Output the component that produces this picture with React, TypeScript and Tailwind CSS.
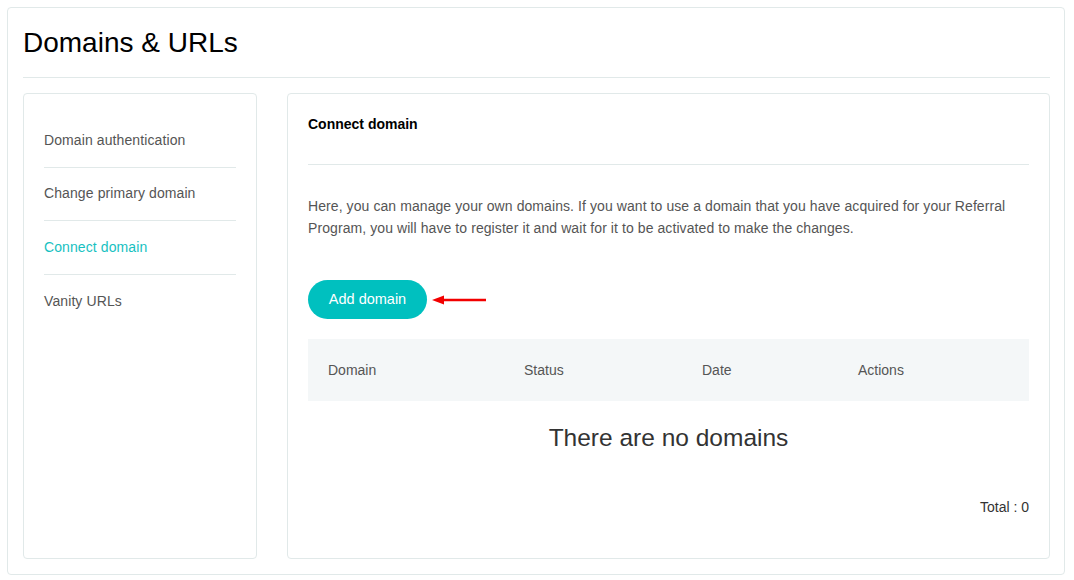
import React from "react";

const font = { fontFamily: '"Liberation Sans", Arial, sans-serif' };

export default function App() {
  const items = ["Domain authentication", "Change primary domain", "Connect domain", "Vanity URLs"];
  return (
    <div className="w-[1074px] h-[580px] bg-white p-[7px]" style={font}>
      <div className="h-[568px] w-[1058px] border border-[#e1e9e9] rounded-[4px] pl-[15px] pr-[14px] pt-[19px]">
        <h1 className="text-[28px] leading-[32px] text-black pb-[18px] border-b border-[#e1e9e9]">Domains &amp; URLs</h1>
        <div className="flex gap-[30px] mt-[15px]">
          <div className="w-[234px] h-[466px] border border-[#e1e9e9] rounded-[4px] px-[20px] pt-[20px]">
            {items.map((t, i) => (
              <div
                key={t}
                className={`h-[53.5px] flex items-center text-[14px] tracking-[0.1px] ${i < items.length - 1 ? "border-b border-[#e1e9e9]" : ""} ${i === 2 ? "text-[#17c1c1]" : "text-[#555555]"}`}
              >
                {t}
              </div>
            ))}
          </div>
          <div className="flex-1 h-[466px] border border-[#e1e9e9] rounded-[4px] px-[20px] pt-[22px] flex flex-col">
            <div className="text-[14px] font-bold text-black leading-[16px] pb-[32px] border-b border-[#e1e9e9]">Connect domain</div>
            <p className="text-[14px] leading-[22px] text-[#555555] mt-[30px] tracking-[0.08px]">
              Here, you can manage your own domains. If you want to use a domain that you have acquired for your Referral Program, you will have to register it and wait for it to be activated to make the changes.
            </p>
            <div className="flex items-center mt-[41px]">
              <button className="h-[39px] w-[119px] rounded-full bg-[#00c0bf] text-white text-[14.5px]">Add domain</button>
              <svg width="62" height="12" viewBox="0 0 62 12" className="ml-[3px]">
                <line x1="10" y1="6" x2="56" y2="6" stroke="#f20000" strokeWidth="2.5" />
                <polygon points="2,6 14,1.5 14,10.5" fill="#f20000" />
              </svg>
            </div>
            <div className="mt-[20px] h-[62px] bg-[#f4f7f8] flex items-center text-[14px] text-[#555555] px-[20px]">
              <div className="w-[196px]">Domain</div>
              <div className="w-[178px]">Status</div>
              <div className="w-[156px]">Date</div>
              <div>Actions</div>
            </div>
            <div className="text-center text-[24.5px] text-[#333333] mt-[23px] leading-[28px]">There are no domains</div>
            <div className="text-right text-[14px] text-[#333333] mt-[45px]">Total : 0</div>
          </div>
        </div>
      </div>
    </div>
  );
}
